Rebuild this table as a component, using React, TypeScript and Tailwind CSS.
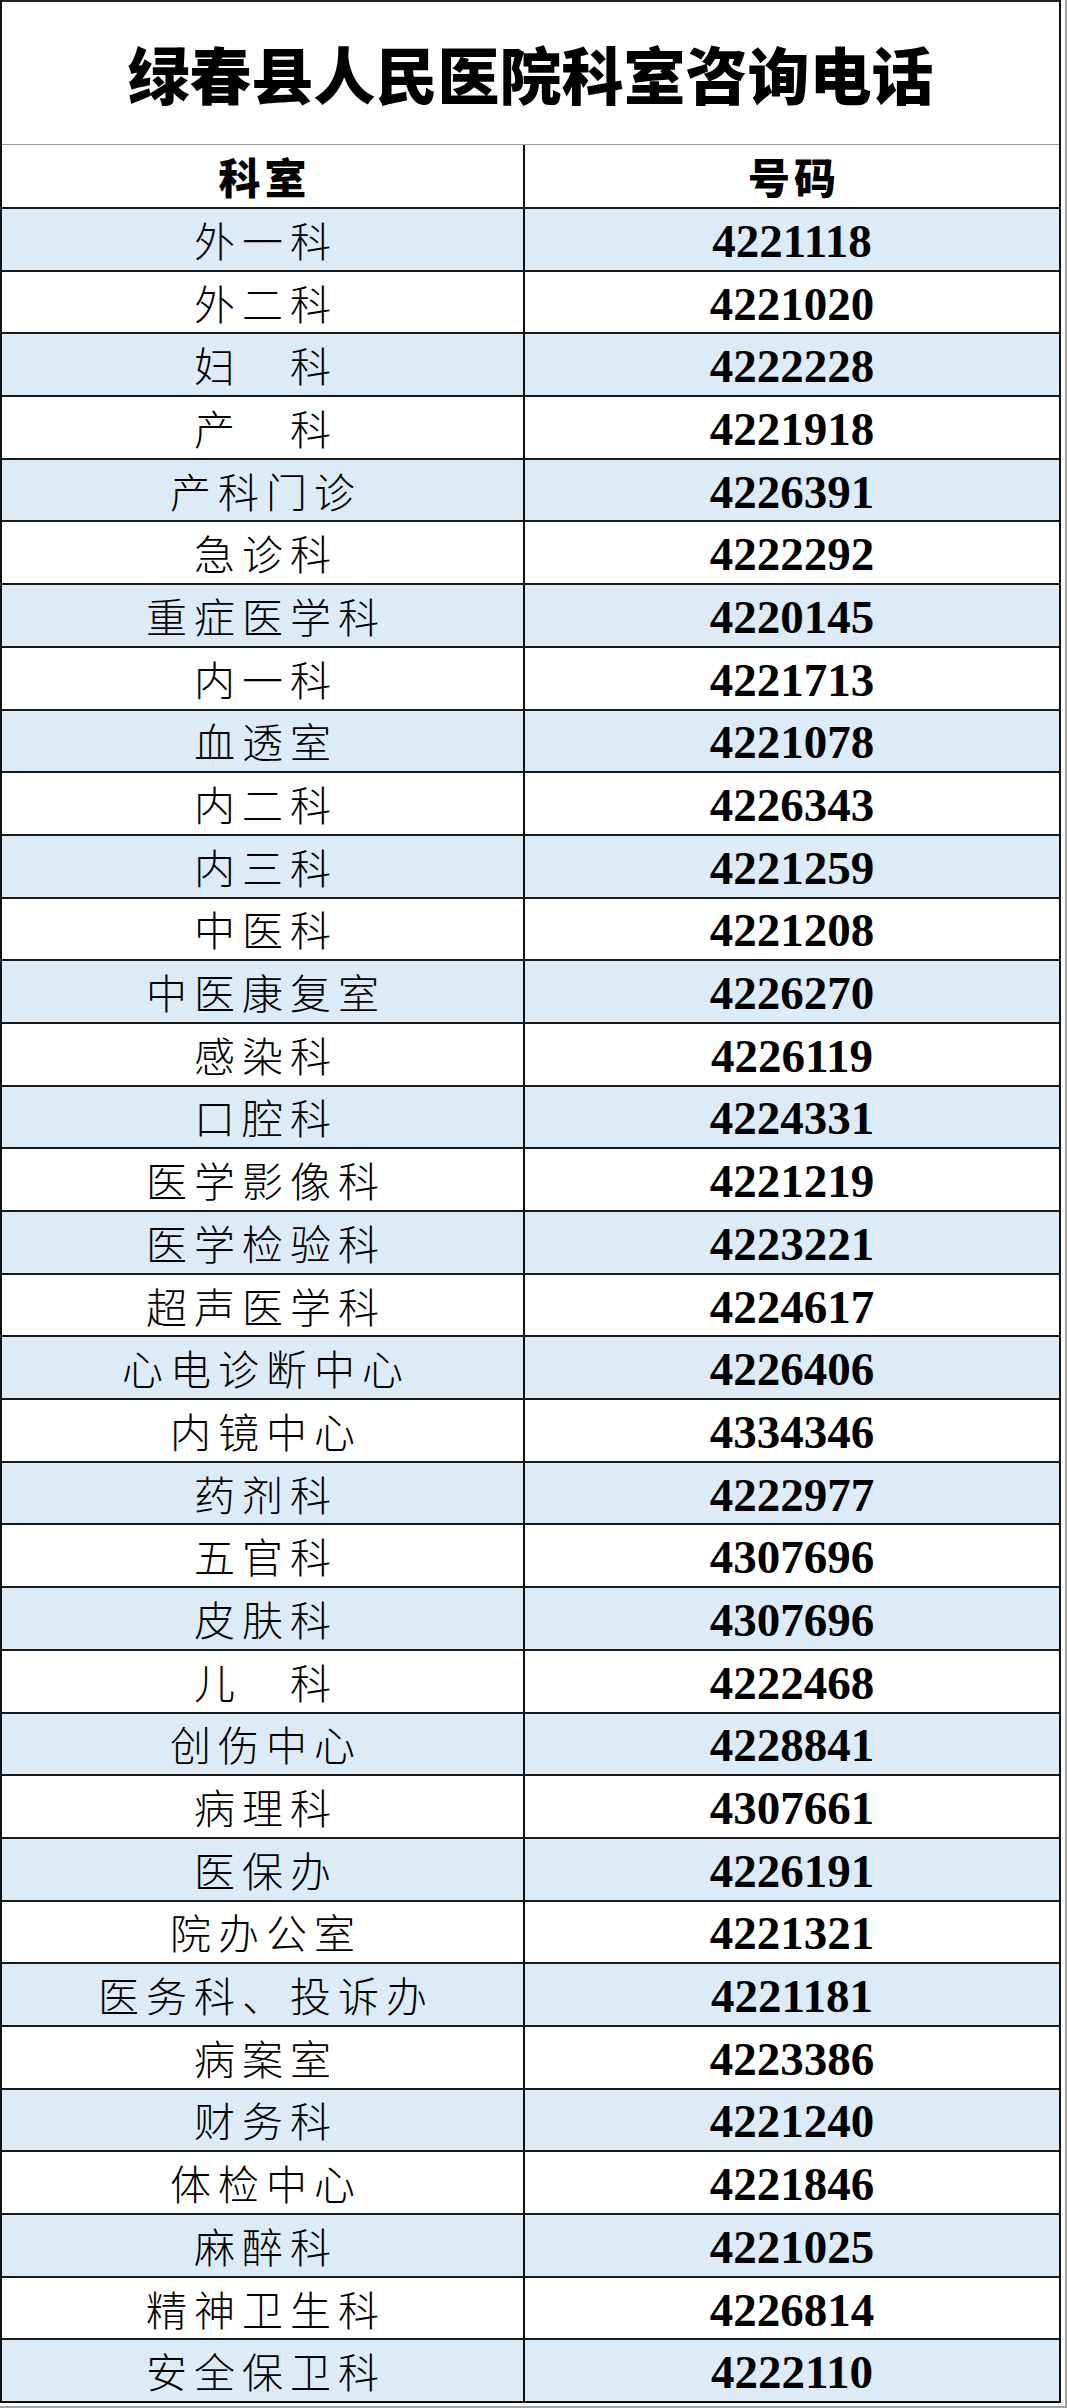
const rows: [string, string][] = [
  ["外一科", "4221118"],
  ["外二科", "4221020"],
  ["妇　科", "4222228"],
  ["产　科", "4221918"],
  ["产科门诊", "4226391"],
  ["急诊科", "4222292"],
  ["重症医学科", "4220145"],
  ["内一科", "4221713"],
  ["血透室", "4221078"],
  ["内二科", "4226343"],
  ["内三科", "4221259"],
  ["中医科", "4221208"],
  ["中医康复室", "4226270"],
  ["感染科", "4226119"],
  ["口腔科", "4224331"],
  ["医学影像科", "4221219"],
  ["医学检验科", "4223221"],
  ["超声医学科", "4224617"],
  ["心电诊断中心", "4226406"],
  ["内镜中心", "4334346"],
  ["药剂科", "4222977"],
  ["五官科", "4307696"],
  ["皮肤科", "4307696"],
  ["儿　科", "4222468"],
  ["创伤中心", "4228841"],
  ["病理科", "4307661"],
  ["医保办", "4226191"],
  ["院办公室", "4221321"],
  ["医务科、投诉办", "4221181"],
  ["病案室", "4223386"],
  ["财务科", "4221240"],
  ["体检中心", "4221846"],
  ["麻醉科", "4221025"],
  ["精神卫生科", "4226814"],
  ["安全保卫科", "4222110"],
];

export default function App() {
  return (
    <div className="w-[1067px] h-[2408px] overflow-hidden bg-white pr-[4px] pb-[3px] border-r-2 border-b-2 border-[#a3a3a3]">
      <div className="w-[1061px] border-l-2 border-r-2 border-[#111] text-black">
        {/* title */}
        <div className="h-[145px] border-t-2 border-t-[#222] border-b border-b-[#9e9e9e] flex items-center justify-center">
          <h1 className="font-['Noto_Sans_CJK_SC',sans-serif] font-black text-[62px] leading-none">
            绿春县人民医院科室咨询电话
          </h1>
        </div>

        {/* header */}
        <div className="h-[62px] flex">
          <div className="w-[523px] border-r-2 border-[#111] flex items-center justify-center">
            <span className="font-['Noto_Sans_CJK_SC',sans-serif] font-black text-[42px] leading-none tracking-[4px] pl-[4px]">
              科室
            </span>
          </div>
          <div className="flex-1 flex items-center justify-center">
            <span className="font-['Noto_Sans_CJK_SC',sans-serif] font-black text-[42px] leading-none tracking-[4px] pl-[4px]">
              号码
            </span>
          </div>
        </div>

        {/* rows */}
        <div className="border-b-2 border-[#111]">
          {rows.map(([name, phone], i) => (
            <div
              key={i}
              className={`h-[62.7px] flex border-t-2 border-[#1a1a1a] ${i % 2 === 0 ? "bg-[#ddebf7]" : "bg-white"}`}
            >
              <div className="w-[523px] border-r-2 border-[#111] flex items-center justify-center">
                <span className="font-['Noto_Sans_CJK_SC',sans-serif] font-light text-[41px] leading-none tracking-[7px] pl-[7px] whitespace-pre">
                  {name}
                </span>
              </div>
              <div className="flex-1 flex items-center justify-center pt-[4px]">
                <span className="font-['Liberation_Serif',serif] font-bold text-[47px] leading-none">
                  {phone}
                </span>
              </div>
            </div>
          ))}
        </div>
      </div>
    </div>
  );
}
